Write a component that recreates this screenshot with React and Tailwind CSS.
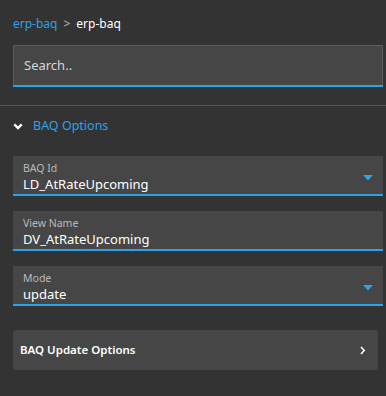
import React from "react";

function Caret() {
  return (
    <svg width="10" height="6" viewBox="0 0 10 6" className="shrink-0">
      <path d="M0 0h10L5 5.5z" fill="#2da1ea" />
    </svg>
  );
}

function Field({ label, value, select }) {
  return (
    <div className="flex items-end justify-between bg-[#464646] border-b-2 border-[#2da1ea] pl-[10px] pr-[10px] pt-[5px] pb-px">
      <div className="flex flex-col">
        <span className="text-[10.5px] leading-[14px] text-[#b9b9b9]">{label}</span>
        <span className="text-[13px] leading-[18px] text-white">{value}</span>
      </div>
      {select && (
        <div className="mb-[12px]">
          <Caret />
        </div>
      )}
    </div>
  );
}

export default function App() {
  return (
    <div
      className="w-[386px] h-[396px] bg-[#333333] overflow-hidden"
      style={{ fontFamily: '"Noto Sans", "Open Sans", sans-serif' }}
    >
      <div className="px-[13px] pt-[15px]">
        <div className="flex items-center gap-[6px] text-[12px] leading-[18px]">
          <span className="text-[#2da1ea]">erp-baq</span>
          <span className="text-[#bdbdbd]">&gt;</span>
          <span className="text-white">erp-baq</span>
        </div>
        <div className="mt-[12px] w-[370px] h-[42px] bg-[#464646] border border-[#5c5c5c] border-b-0 flex flex-col">
          <div className="flex-1 flex items-center pl-[10px] text-[13px] text-[#d6d6d6]">Search..</div>
          <div className="h-[2px] bg-[#2da1ea] -mx-px" />
        </div>
      </div>

      <div className="mt-[18px] h-px bg-[#575757]" />

      <div className="flex items-center gap-[10px] pl-[13px] mt-[12px] text-[12.5px] leading-[16px] text-[#2da1ea]">
        <svg width="10" height="7" viewBox="0 0 10 7">
          <path d="M1.3 1.3L5 5l3.7-3.7" fill="none" stroke="#ffffff" strokeWidth="2.4" />
        </svg>
        <span>BAQ Options</span>
      </div>

      <div className="px-[13px] pr-[3px] mt-[22px] flex flex-col gap-[15px]">
        <Field label="BAQ Id" value="LD_AtRateUpcoming" select />
        <Field label="View Name" value="DV_AtRateUpcoming" />
        <Field label="Mode" value="update" select />
      </div>

      <div className="ml-[13px] mr-[8px] mt-[24px] h-[40px] rounded-[3px] bg-[#464646] flex items-center justify-between pl-[7px] pr-[12px]">
        <span className="text-[11.5px] font-semibold text-white">BAQ Update Options</span>
        <svg width="6" height="9" viewBox="0 0 6 9">
          <path d="M1 1l3.2 3.5L1 8" fill="none" stroke="#ffffff" strokeWidth="1.6" />
        </svg>
      </div>
    </div>
  );
}
